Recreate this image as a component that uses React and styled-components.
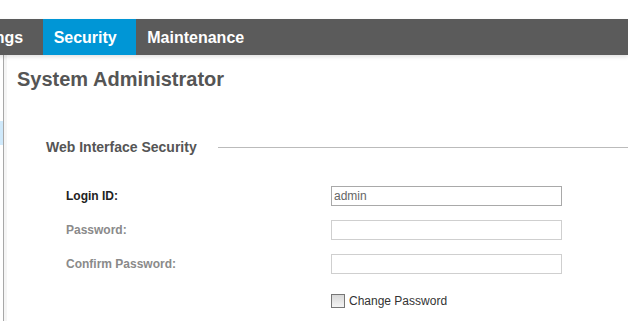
import React from "react";
import styled, { createGlobalStyle } from "styled-components";

const GlobalStyles = createGlobalStyle`
  html, body {
    margin: 0;
    padding: 0;
    background: #fff;
    overflow: hidden;
    font-family: "Liberation Sans", Arial, sans-serif;
  }
`;

const Page = styled.div`
  width: 628px;
  height: 321px;
  padding-top: 19px;
  box-sizing: border-box;
  display: flex;
  flex-direction: column;
`;

const NavBar = styled.div`
  height: 36px;
  background: #5b5b5b;
  display: flex;
  margin-left: -51px;
  box-shadow: 0 2px 4px rgba(0, 0, 0, 0.12);
  position: relative;
  z-index: 1;
`;

const Tab = styled.div`
  display: flex;
  align-items: center;
  padding: 1px 19.5px 0 11px;
  font-size: 16px;
  font-weight: bold;
  color: #fff;
  background: ${(p) => (p.active ? "#0096d6" : "transparent")};
`;

const Body = styled.div`
  flex: 1;
  display: flex;
`;

const Sidebar = styled.div`
  width: 3px;
  border-right: 1px solid #a8a8a8;
  padding-top: 66px;
`;

const SideItem = styled.div`
  height: 24px;
  background: #cfe9fb;
`;

const Content = styled.div`
  flex: 1;
  border-left: 3px solid #f5f5f5;
  padding: 12px 0 0 10px;
`;

const Heading = styled.h1`
  margin: 0;
  font-size: 20px;
  font-weight: bold;
  color: #555;
  line-height: 24px;
`;

const Section = styled.div`
  display: flex;
  align-items: center;
  margin: 48px 0 0 29px;
  gap: 21px;
`;

const SectionTitle = styled.div`
  font-size: 14px;
  font-weight: bold;
  color: #555;
  white-space: nowrap;
`;

const Rule = styled.div`
  flex: 1;
  height: 1px;
  background: #bbb;
`;

const Form = styled.div`
  margin: 31px 0 0 49px;
  display: grid;
  grid-template-columns: 265px 231px;
  row-gap: 14px;
  align-items: center;
`;

const Label = styled.div`
  font-size: 12px;
  font-weight: bold;
  color: ${(p) => (p.muted ? "#8a8a8a" : "#222")};
`;

const Input = styled.input`
  box-sizing: border-box;
  width: 231px;
  height: 20px;
  margin: 0;
  padding: 0 2px;
  border: 1px solid ${(p) => (p.dark ? "#a9a9a9" : "#cfcfcf")};
  font-family: "Liberation Sans", Arial, sans-serif;
  font-size: 12px;
  color: #666;
  outline: none;
`;

const CheckRow = styled.label`
  display: flex;
  align-items: center;
  gap: 4px;
  margin-top: 6px;
  font-size: 12px;
  color: #333;
`;

const Box = styled.span`
  width: 12px;
  height: 12px;
  border: 1px solid #777;
  background: linear-gradient(#d8d8d8, #f4f4f4);
`;

export default function App() {
  return (
    <>
      <GlobalStyles />
      <Page>
        <NavBar>
          <Tab>Settings</Tab>
          <Tab active>Security</Tab>
          <Tab>Maintenance</Tab>
        </NavBar>
        <Body>
          <Sidebar>
            <SideItem />
          </Sidebar>
          <Content>
            <Heading>System Administrator</Heading>
            <Section>
              <SectionTitle>Web Interface Security</SectionTitle>
              <Rule />
            </Section>
            <Form>
              <Label>Login ID:</Label>
              <Input dark defaultValue="admin" />
              <Label muted>Password:</Label>
              <Input type="password" />
              <Label muted>Confirm Password:</Label>
              <Input type="password" />
              <span />
              <CheckRow>
                <Box />
                Change Password
              </CheckRow>
            </Form>
          </Content>
        </Body>
      </Page>
    </>
  );
}
